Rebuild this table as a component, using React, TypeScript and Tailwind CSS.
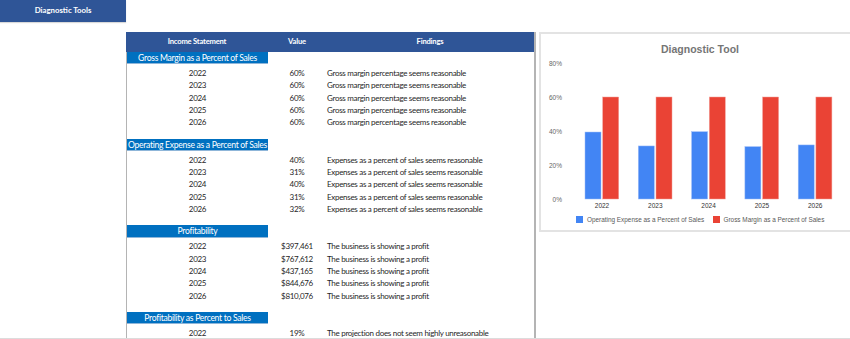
import React from "react";

interface Row {
    year: string;
    value: string;
    finding: string;
}

interface Section {
    title: string;
    rows: Row[];
}

const sections: Section[] = [
    {
        title: "Gross Margin as a Percent of Sales",
        rows: ["2022", "2023", "2024", "2025", "2026"].map((year) => ({
            year,
            value: "60%",
            finding: "Gross margin percentage seems reasonable",
        })),
    },
    {
        title: "Operating Expense as a Percent of Sales",
        rows: [
            ["2022", "40%"],
            ["2023", "31%"],
            ["2024", "40%"],
            ["2025", "31%"],
            ["2026", "32%"],
        ].map(([year, value]) => ({ year, value, finding: "Expenses as a percent of sales seems reasonable" })),
    },
    {
        title: "Profitability",
        rows: [
            ["2022", "$397,461"],
            ["2023", "$767,612"],
            ["2024", "$437,165"],
            ["2025", "$844,676"],
            ["2026", "$810,076"],
        ].map(([year, value]) => ({ year, value, finding: "The business is showing a profit" })),
    },
    {
        title: "Profitability as Percent to Sales",
        rows: [{ year: "2022", value: "19%", finding: "The projection does not seem highly unreasonable" }],
    },
];

const chartData = [
    { year: "2022", opex: 39.4, gross: 60 },
    { year: "2023", opex: 31.2, gross: 60 },
    { year: "2024", opex: 39.6, gross: 60 },
    { year: "2025", opex: 30.8, gross: 60 },
    { year: "2026", opex: 31.8, gross: 60 },
];

function DiagnosticChart() {
    const base = 165;
    const scale = 1.7;
    return (
        <svg width="320" height="196" className="block font-['Liberation_Sans',Arial,sans-serif]">
            <text x="159" y="14.5" fontSize="10.5" fontWeight="bold" fill="#757575" textAnchor="middle" dominantBaseline="central">
                Diagnostic Tool
            </text>
            {[80, 60, 40, 20, 0].map((v) => (
                <text key={v} x="21" y={base - v * scale} fontSize="6.5" fill="#666" textAnchor="end" dominantBaseline="central">
                    {v}%
                </text>
            ))}
            {chartData.map((d, i) => {
                const x = 44 + 53.3 * i;
                return (
                    <g key={d.year}>
                        <rect x={x} y={base - d.opex * scale} width="16" height={d.opex * scale} fill="#4285f4" stroke="#9dbcf7" strokeWidth="0.5" />
                        <rect x={x + 17.7} y={base - d.gross * scale} width="16" height={d.gross * scale} fill="#ea4335" stroke="#f2a099" strokeWidth="0.5" />
                        <text x={x + 17} y="171.5" fontSize="6.5" fill="#333" textAnchor="middle" dominantBaseline="central">
                            {d.year}
                        </text>
                    </g>
                );
            })}
            <rect x="35" y="182" width="7" height="7" fill="#4285f4" />
            <text x="46" y="185" fontSize="6.4" fill="#595959" dominantBaseline="central">
                Operating Expense as a Percent of Sales
            </text>
            <rect x="172" y="182" width="7" height="7" fill="#ea4335" />
            <text x="182.5" y="185" fontSize="6.4" fill="#595959" dominantBaseline="central">
                Gross Margin as a Percent of Sales
            </text>
        </svg>
    );
}

export default function App() {
    return (
        <div className="w-[850px] h-[339px] overflow-hidden bg-white border-b border-[#dcdcdc] font-['Lato',sans-serif]">
            <div className="w-[126px] h-[22px] bg-[#2f5597] flex items-center justify-center text-white text-[7.8px] font-bold shadow-[0_1px_1px_rgba(0,0,0,0.15)]">
                Diagnostic Tools
            </div>

            <div className="flex items-start mt-[10px]">
                <div className="shrink-0 ml-[126px] w-[410px] border-l border-r-2 border-[#b4b4b4] text-[8px] tracking-[-0.3px] leading-none text-[#1f1f1f]">
                    <div className="flex h-[20px] bg-[#2f5597] text-white text-[7.6px] tracking-[-0.2px] font-bold items-center -ml-px">
                        <div className="w-[142px] text-center">Income Statement</div>
                        <div className="w-[58px] text-center">Value</div>
                        <div className="flex-1 text-center">Findings</div>
                    </div>
                    {sections.map((s) => (
                        <div key={s.title}>
                            <div className="flex h-[12.4px]">
                                <div className="w-[141px] pt-[1px] bg-[#0070c0] text-white text-[8.6px] flex items-center justify-center whitespace-nowrap border-b border-[#8fb6d9]">
                                    {s.title}
                                </div>
                            </div>
                            <div className="h-[1.5px]" />
                            {s.rows.map((r) => (
                                <div key={r.year} className="flex h-[12.3px] pt-[2px] items-center">
                                    <div className="w-[141px] text-center">{r.year}</div>
                                    <div className="w-[58px] text-center">{r.value}</div>
                                    <div className="flex-1 pl-[1px] whitespace-nowrap">{r.finding}</div>
                                </div>
                            ))}
                            <div className="h-[11.3px]" />
                        </div>
                    ))}
                </div>

                <div className="shrink-0 ml-[3px] w-[330px] h-[200px] border-2 border-[#e3e3e3] bg-white">
                    <DiagnosticChart />
                </div>
            </div>
        </div>
    );
}
